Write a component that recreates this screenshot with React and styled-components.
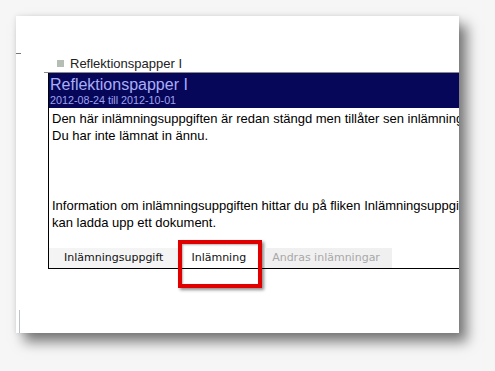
import React from 'react';
import styled, { createGlobalStyle } from 'styled-components';

const GlobalStyle = createGlobalStyle`
  html, body {
    margin: 0;
    padding: 0;
    background: #f6f6f6;
  }
  body {
    font-family: "Liberation Sans", Arial, sans-serif;
  }
`;

const Page = styled.div`
  width: 495px;
  height: 371px;
  padding: 16px 0 0 16px;
  box-sizing: border-box;
`;

const Card = styled.div`
  position: relative;
  width: 443px;
  height: 317px;
  background: #fff;
  overflow: hidden;
  padding: 38px 0 0 28px;
  box-sizing: border-box;
  box-shadow: 0 0 5px rgba(0, 0, 0, 0.1), 8px 9px 12px rgba(0, 0, 0, 0.5);
`;

const EdgeMark = styled.div`
  position: absolute;
  left: 0;
  top: 37px;
  width: 5px;
  height: 1px;
  background: #777;
`;

const EdgeLine = styled.div`
  position: absolute;
  left: 3px;
  bottom: 0;
  width: 1px;
  height: 23px;
  background: #b8c4cc;
`;

const Crumb = styled.div`
  display: flex;
  align-items: center;
  gap: 6px;
  height: 18px;
  padding-left: 13px;
  border-bottom: 1px solid #8a8a8a;
  font-size: 13px;
  color: #222;
`;

const CrumbSquare = styled.span`
  width: 7px;
  height: 7px;
  background: #b5bdb5;
`;

const Box = styled.div`
  margin-left: 4px;
  border-left: 1px solid #000;
`;

const Header = styled.div`
  background: #07075a;
  color: #a9adf7;
  padding: 2px 1px 1px;
`;

const Title = styled.div`
  font-size: 16px;
  line-height: 19px;
`;

const Dates = styled.div`
  font-size: 10.75px;
  line-height: 13px;
  color: #9da2f0;
`;

const Body = styled.div`
  padding: 3px 3px 0;
  font-size: 13px;
  line-height: 16.5px;
  color: #000;
  white-space: nowrap;
`;

const Para = styled.p`
  margin: 0 0 ${p => p.$gap || 0}px;
`;

const Tabs = styled.div`
  display: flex;
  margin-top: 17px;
  border-bottom: 1px solid #000;
  font-family: "DejaVu Sans", Verdana, sans-serif;
  font-size: 11px;
`;

const Tab = styled.div`
  position: relative;
  height: 20px;
  line-height: 20px;
  padding: ${p => p.$pad};
  margin-left: ${p => p.$offset || 0}px;
  background: ${p => p.$bg};
  color: ${p => (p.$disabled ? '#a8a8a8' : '#111')};
`;

const Highlight = styled.div`
  position: absolute;
  left: 0;
  right: -2px;
  top: -8px;
  bottom: -20px;
  border: 4px solid #e00000;
  box-shadow: 2px 2px 3px rgba(0, 0, 0, 0.45), inset 1px 1px 2px rgba(0, 0, 0, 0.3);
`;

export default function App() {
  return (
    <Page>
      <GlobalStyle />
      <Card>
        <EdgeMark />
        <EdgeLine />
        <Crumb>
          <CrumbSquare />
          Reflektionspapper I
        </Crumb>
        <Box>
          <Header>
            <Title>Reflektionspapper I</Title>
            <Dates>2012-08-24 till 2012-10-01</Dates>
          </Header>
          <Body>
            <Para>Den här inlämningsuppgiften är redan stängd men tillåter sen inlämning</Para>
            <Para $gap={54}>Du har inte lämnat in ännu.</Para>
            <Para>Information om inlämningsuppgiften hittar du på fliken Inlämningsuppgift</Para>
            <Para>kan ladda upp ett dokument.</Para>
          </Body>
          <Tabs>
            <Tab $pad="0 15px" $bg="#f4f4f4">Inlämningsuppgift</Tab>
            <Tab $pad="0 14px 0 13px" $bg="#fff">
              Inlämning
              <Highlight />
            </Tab>
            <Tab $pad="0 12px 0 7px" $offset={5} $bg="#f0f0f0" $disabled>
              Andras inlämningar
            </Tab>
          </Tabs>
        </Box>
      </Card>
    </Page>
  );
}
